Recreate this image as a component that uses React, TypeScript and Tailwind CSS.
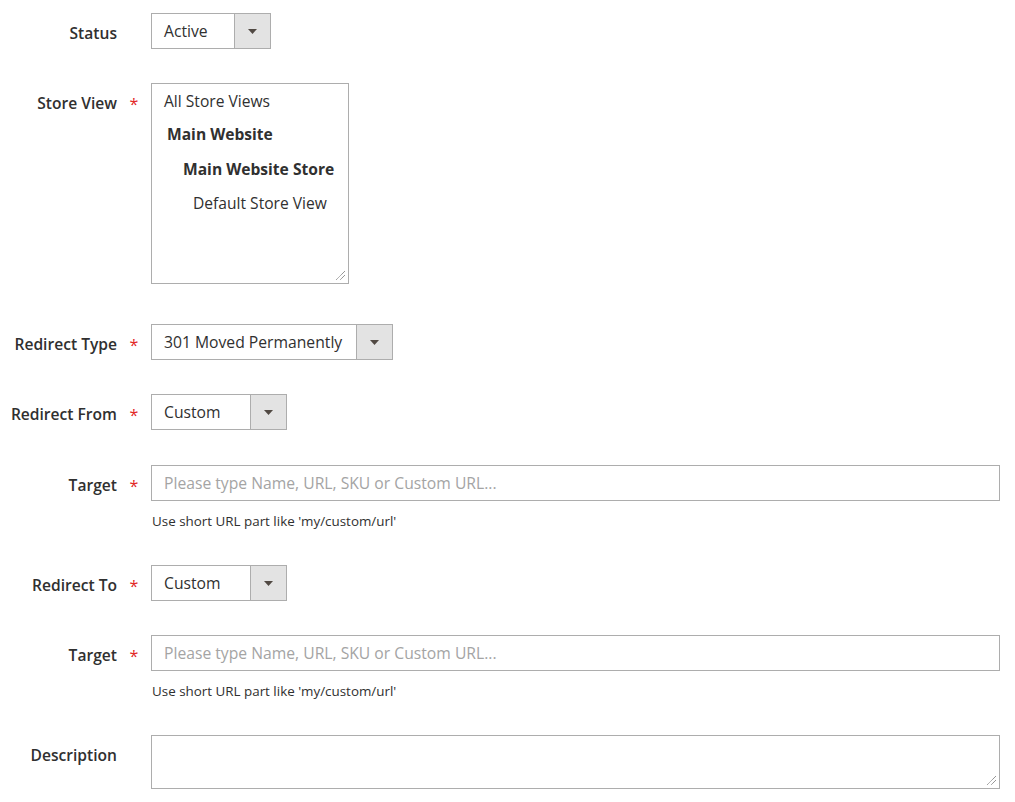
import React from 'react';

const font = { fontFamily: '"Open Sans", "Liberation Sans", sans-serif' };

function Label({ text, required }: { text: string; required?: boolean }) {
  return (
    <div className="flex w-[151px] shrink-0 pt-[10px]">
      <span className="w-[117px] whitespace-nowrap text-right text-[15.6px] font-semibold leading-[20px] text-[#303030]">
        {text}
      </span>
      {required && (
        <span className="w-[34px] pt-[1px] text-center text-[16px] leading-[20px] text-[#e22626]">*</span>
      )}
    </div>
  );
}

function Select({ value, width }: { value: string; width: string }) {
  return (
    <div className={`flex h-9 ${width} border border-[#adadad] bg-white`}>
      <span className="flex-1 whitespace-nowrap pl-3 text-[15.7px] leading-[35px] text-[#303030]">{value}</span>
      <span className="flex w-9 items-center justify-center border-l border-[#adadad] bg-[#e3e3e3]">
        <svg width="9" height="5" viewBox="0 0 9 5">
          <path d="M0 0h9L4.5 5z" fill="#514943" />
        </svg>
      </span>
    </div>
  );
}

function ResizeHandle() {
  return (
    <svg className="absolute bottom-[2px] right-[2px]" width="12" height="12" viewBox="0 0 12 12">
      <path d="M11 2L2 11M11 6L6 11" stroke="#6b6b6b" strokeWidth="1" strokeDasharray="1 0.6" />
    </svg>
  );
}

function TargetField() {
  return (
    <div className="flex flex-1 flex-col">
      <div className="flex h-9 items-center border border-[#adadad] bg-white pl-3 pt-[2px] text-[15.7px] text-[#a4a4a4]">
        Please type Name, URL, SKU or Custom URL...
      </div>
      <div className="mt-[12px] pl-[1px] text-[13.4px] leading-[17px] text-[#303030]">
        Use short URL part like 'my/custom/url'
      </div>
    </div>
  );
}

export default function App() {
  return (
    <div className="min-h-screen bg-white pr-[15px] pt-[13px]" style={font}>
      <div className="flex">
        <Label text="Status" />
        <Select value="Active" width="w-[120px]" />
      </div>

      <div className="mt-[34px] flex">
        <Label text="Store View" required />
        <div className="relative h-[201px] w-[198px] border border-[#adadad] bg-white text-[15.6px] text-[#303030]">
          <div className="pl-3 pt-[7px] leading-[20px]">All Store Views</div>
          <div className="mt-[13px] pl-[15px] font-bold leading-[20px]">Main Website</div>
          <div className="mt-[15px] pl-[31px] font-bold leading-[20px]">Main Website Store</div>
          <div className="mt-[14px] pl-[41px] leading-[20px]">Default Store View</div>
          <ResizeHandle />
        </div>
      </div>

      <div className="mt-[40px] flex">
        <Label text="Redirect Type" required />
        <Select value="301 Moved Permanently" width="w-[242px]" />
      </div>

      <div className="mt-[34px] flex">
        <Label text="Redirect From" required />
        <Select value="Custom" width="w-[136px]" />
      </div>

      <div className="mt-[35px] flex">
        <Label text="Target" required />
        <TargetField />
      </div>

      <div className="mt-[35px] flex">
        <Label text="Redirect To" required />
        <Select value="Custom" width="w-[136px]" />
      </div>

      <div className="mt-[34px] flex">
        <Label text="Target" required />
        <TargetField />
      </div>

      <div className="mt-[35px] flex">
        <Label text="Description" />
        <div className="relative h-[54px] flex-1 border border-[#adadad] bg-white">
          <ResizeHandle />
        </div>
      </div>
    </div>
  );
}
